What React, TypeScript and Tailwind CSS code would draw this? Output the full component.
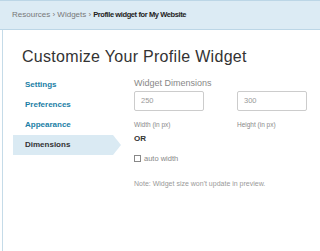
import React from 'react';

const NavItem: React.FC<{ label: string; active?: boolean }> = ({ label, active }) => {
  if (active) {
    return (
      <div className="relative flex items-center h-[20px] ml-[10px] w-[100px] bg-[#daeaf3] pl-[12px] text-[#333] font-bold text-[8px]">
        {label}
        <div className="absolute right-[-8px] top-0 w-0 h-0 border-y-[10px] border-y-transparent border-l-[8px] border-l-[#daeaf3]" />
      </div>
    );
  }
  return (
    <div className="h-[20px] flex items-center pl-[22px] text-[#1b7ea5] font-bold text-[8px]">
      {label}
    </div>
  );
};

export default function App() {
  return (
    <div className="w-[320px] h-[251px] bg-white overflow-hidden font-['Liberation_Sans',Arial,sans-serif]">
      {/* Breadcrumb bar */}
      <header className="h-[30px] bg-[#dcebf4] border-y border-[#bcd6e6] flex items-center pl-[12px] text-[8px]">
        <span className="text-[#777]">Resources › Widgets › </span>
        <span className="font-bold text-[#222] ml-[2px] text-[7.5px] tracking-[-0.4px]">Profile widget for My Website</span>
      </header>

      <div className="ml-[2px] border-l border-[#c5dbe8] h-[221px]">
        <h1 className="pl-[19px] pt-[19px] text-[16px] text-[#333] leading-none tracking-[0.3px]">
          Customize Your Profile Widget
        </h1>

        <div className="flex mt-[10px]">
          {/* Side nav */}
          <nav className="w-[131px] flex flex-col">
            <NavItem label="Settings" />
            <NavItem label="Preferences" />
            <NavItem label="Appearance" />
            <NavItem label="Dimensions" active />
          </nav>

          {/* Dimensions form */}
          <div className="flex flex-col">
            <div className="text-[9px] text-[#888] leading-none mt-[4px]">Widget Dimensions</div>
            <div className="flex gap-[33px] mt-[3px]">
              <div className="flex flex-col">
                <div className="w-[70px] h-[20px] border border-[#ccc] rounded-[2px] flex items-center pl-[6px] text-[7.5px] text-[#999]">250</div>
                <div className="text-[6.5px] text-[#888] mt-[9px]">Width (in px)</div>
              </div>
              <div className="flex flex-col">
                <div className="w-[70px] h-[20px] border border-[#ccc] rounded-[2px] flex items-center pl-[6px] text-[7.5px] text-[#999]">300</div>
                <div className="text-[6.5px] text-[#888] mt-[9px]">Height (in px)</div>
              </div>
            </div>
            <div className="text-[8px] font-bold text-[#333] mt-[3px]">OR</div>
            <div className="flex items-center mt-[8px]">
              <div className="w-[7px] h-[7px] border border-[#888] bg-white" />
              <span className="text-[7.5px] text-[#888] ml-[3px]">auto width</span>
            </div>
            <div className="text-[7px] text-[#999] mt-[15px]">Note: Widget size won't update in preview.</div>
          </div>
        </div>
      </div>
    </div>
  );
}
